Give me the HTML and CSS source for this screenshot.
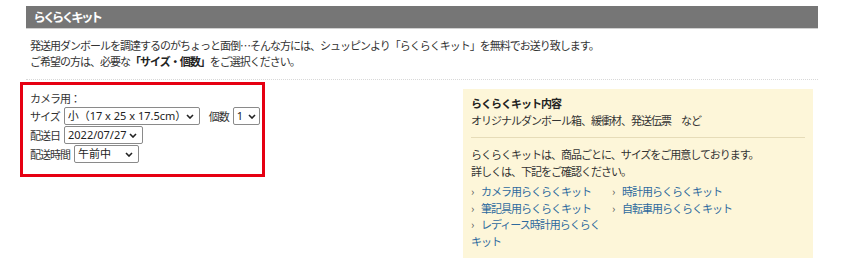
FILE: index.html
```html
<!DOCTYPE html>
<html lang="ja">
<head>
<meta charset="utf-8">
<link rel="stylesheet" href="styles.css">
</head>
<body>
<section class="kit">
  <h2 class="kit-title">らくらくキット</h2>
  <p class="intro">発送用ダンボールを調達するのがちょっと面倒…そんな方には、シュッピンより「らくらくキット」を無料でお送り致します。<br>ご希望の方は、必要な<strong>「サイズ・個数」</strong>をご選択ください。</p>
  <div class="kit-body">
    <form class="order">
      <div class="order-line">カメラ用：</div>
      <div class="order-row">
        <label>サイズ</label>
        <span class="sel-wrap sel-size"><select class="sel"><option>小（17 x 25 x 17.5cm）</option></select><svg class="chev" viewBox="0 0 8 5" width="8" height="5"><path d="M1 1 L4 4 L7 1" fill="none" stroke="#222" stroke-width="1.6"/></svg></span>
        <label class="qty-label">個数</label>
        <span class="sel-wrap sel-qty"><select class="sel"><option>1</option></select><svg class="chev" viewBox="0 0 8 5" width="8" height="5"><path d="M1 1 L4 4 L7 1" fill="none" stroke="#222" stroke-width="1.6"/></svg></span>
      </div>
      <div class="order-row">
        <label>配送日</label>
        <span class="sel-wrap sel-date"><select class="sel"><option>2022/07/27</option></select><svg class="chev" viewBox="0 0 8 5" width="8" height="5"><path d="M1 1 L4 4 L7 1" fill="none" stroke="#222" stroke-width="1.6"/></svg></span>
      </div>
      <div class="order-row">
        <label>配送時間</label>
        <span class="sel-wrap sel-time"><select class="sel"><option>午前中</option></select><svg class="chev" viewBox="0 0 8 5" width="8" height="5"><path d="M1 1 L4 4 L7 1" fill="none" stroke="#222" stroke-width="1.6"/></svg></span>
      </div>
    </form>
    <aside class="contents">
      <h3 class="contents-title">らくらくキット内容</h3>
      <p class="contents-text">オリジナルダンボール箱、緩衝材、発送伝票　など</p>
      <p class="contents-note">らくらくキットは、商品ごとに、サイズをご用意しております。<br>詳しくは、下記をご確認ください。</p>
      <ul class="links">
        <li><a href="#">カメラ用らくらくキット</a></li>
        <li><a href="#">時計用らくらくキット</a></li>
        <li><a href="#">筆記具用らくらくキット</a></li>
        <li><a href="#">自転車用らくらくキット</a></li>
        <li><a href="#">レディース時計用らくらくキット</a></li>
      </ul>
    </aside>
  </div>
</section>
</body>
</html>
```

FILE: styles.css
```css
* { box-sizing: border-box; }
body {
  margin: 0;
  background: #fff;
  font-family: "Noto Sans CJK JP", "Noto Sans", sans-serif;
  font-size: 11px;
  letter-spacing: -1px;
  color: #333;
}
.kit {
  width: 792px;
  margin: 6px 0 0 26px;
}
.kit-title {
  margin: 0;
  height: 23px;
  background: #767676;
  border-bottom: 1px solid #d0d0d0;
  color: #fff;
  font-size: 12.5px;
  font-weight: bold;
  line-height: 22px;
  padding-left: 8px;
  font-feature-settings: "palt";
  letter-spacing: -0.8px;
}
.intro {
  margin: 0;
  padding: 8px 0 10px 4px;
  line-height: 16px;
  border-bottom: 1px dotted #d8d8d8;
}
.intro strong { color: #222; }
.kit-body {
  display: flex;
  align-items: flex-start;
  justify-content: space-between;
}
.order {
  margin: 2px 0 0 -6px;
  width: 245px;
  height: 95px;
  border: 3px solid #e60012;
  padding: 5px 6px 0 7px;
}
.order-line { line-height: 16px; }
.order-row {
  display: flex;
  align-items: center;
  gap: 4px;
  height: 19px;
  white-space: nowrap;
}
.order-row label { flex-shrink: 0; }
.qty-label { margin-left: 5px; }
.sel-wrap {
  position: relative;
  display: inline-flex;
  flex-shrink: 0;
  height: 18px;
}
.sel {
  -webkit-appearance: none;
  appearance: none;
  width: 100%;
  height: 18px;
  font-family: "Noto Sans", "Noto Sans CJK JP", sans-serif;
  font-size: 11px;
  letter-spacing: 0;
  color: #222;
  background: #fff;
  border: 1px solid #8a8a8a;
  border-radius: 2px;
  padding: 0 0 0 3px;
  line-height: 16px;
}
.chev {
  position: absolute;
  right: 6px;
  top: 7px;
  pointer-events: none;
}
.sel-size { width: 136px; }
.sel-qty { width: 27px; }
.sel-qty .chev { right: 4px; }
.sel-date { width: 79px; }
.sel-time { width: 65px; }
.contents {
  margin: 9px 5px 0 0;
  width: 350px;
  min-height: 169px;
  background: #fdf6d9;
  padding: 6px 8px 8px 8px;
  line-height: 16.5px;
}
.contents-title {
  margin: 0;
  font-size: 11px;
  font-weight: bold;
  color: #222;
}
.contents-text {
  margin: 0;
  padding-bottom: 9px;
  border-bottom: 1px solid #e6dcb8;
}
.contents-note { margin: 8px 0 0; }
.links {
  list-style: none;
  margin: 4px 0 0;
  padding: 0;
  display: grid;
  grid-template-columns: 138px 138px;
  column-gap: 3px;
}
.links li { line-height: 16.5px; }
.links li::before {
  content: "›";
  display: inline-block;
  width: 10px;
  color: #555;
  letter-spacing: 0;
}
.links a {
  color: #2e6a9e;
  text-decoration: none;
}
```
